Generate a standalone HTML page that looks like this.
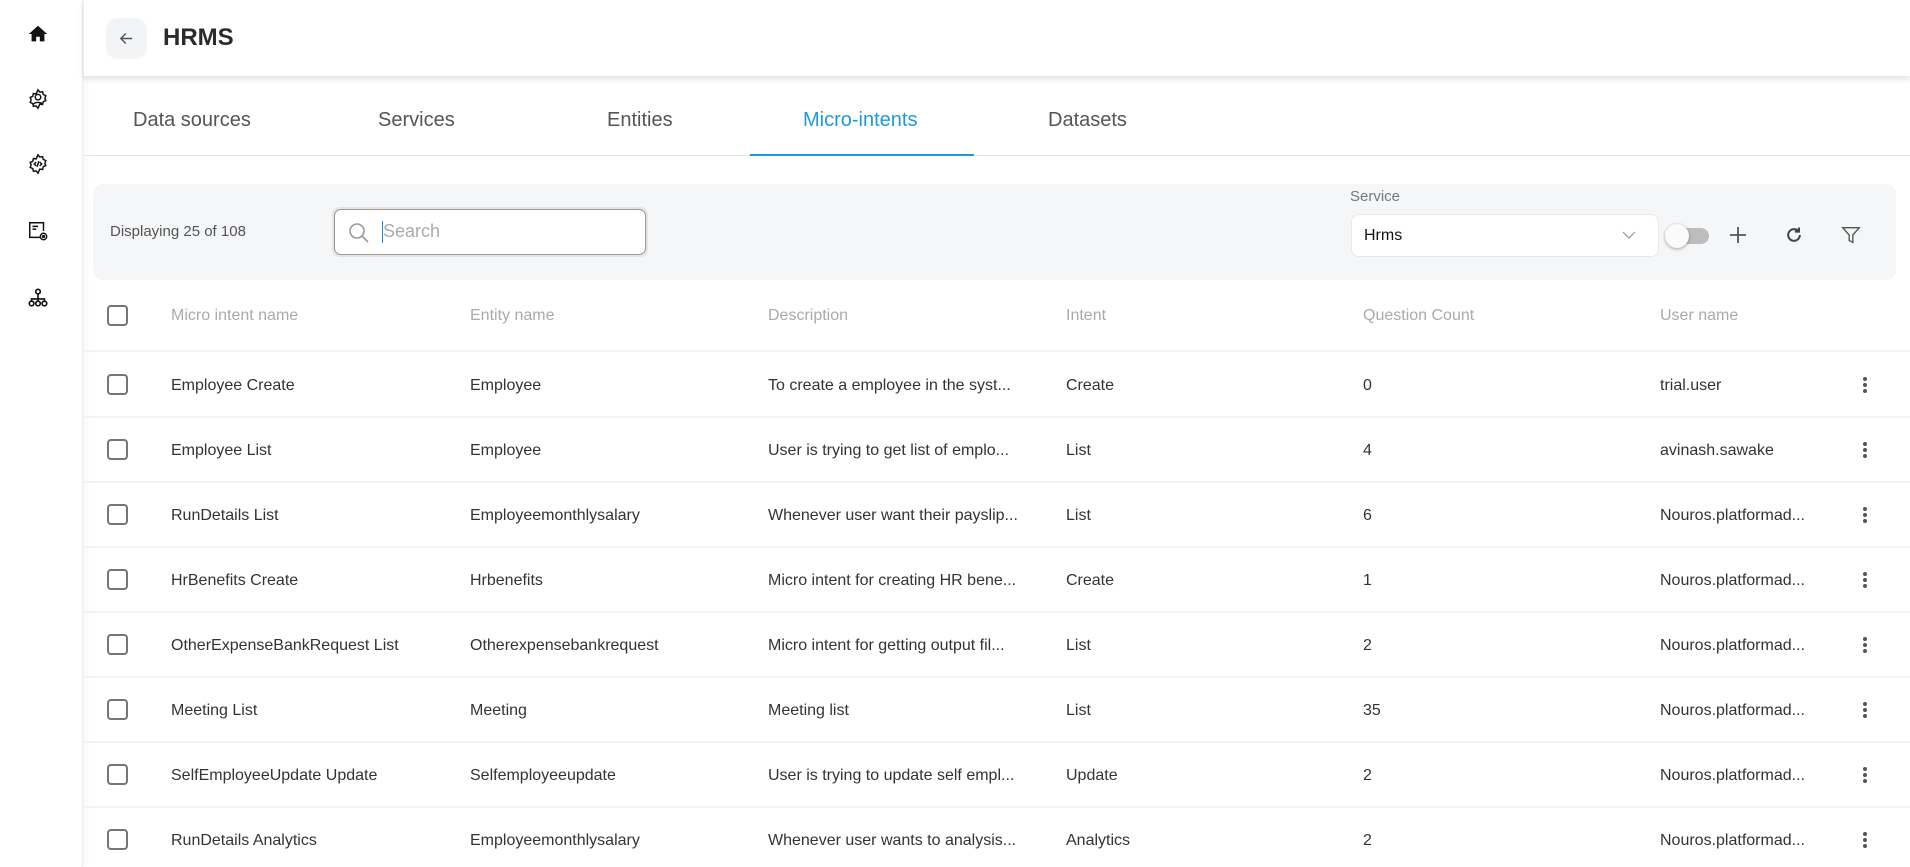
<!DOCTYPE html>
<html><head><meta charset="utf-8"><style>
*{box-sizing:border-box;margin:0;padding:0}
body{width:1910px;height:867px;overflow:hidden;background:#fff;font-family:"Liberation Sans",sans-serif;color:#333;position:relative}
.side{position:absolute;left:0;top:0;width:83px;height:867px;background:#fff;border-right:1px solid #eee;box-shadow:2px 0 6px rgba(0,0,0,.05)}
.side svg{position:absolute;left:27px}
.hdr{position:absolute;left:84px;top:0;right:0;height:76px;background:#fff;box-shadow:0 3px 6px rgba(0,0,0,.12)}
.back{position:absolute;left:22px;top:18px;width:41px;height:41px;border-radius:12px;background:#f3f4f6}
.title{position:absolute;left:79px;top:24px;font-size:24px;font-weight:bold;color:#2b2b2b}
.tabs{position:absolute;left:84px;top:84px;right:0;height:72px;border-bottom:1px solid #e8e8e8}
.tab{position:absolute;top:25px;font-size:20px;color:#555}
.tab.act{color:#1e9bd7}
.ul{position:absolute;left:666px;width:224px;bottom:-1px;height:2px;background:#1e9bd7}
.bar{position:absolute;left:93px;top:184px;width:1803px;height:96px;background:#f5f6f8;border-radius:10px}
.t{position:absolute;white-space:nowrap;font-size:16px}
.r{margin-top:2px}
.cb{position:absolute;left:107px;width:21px;height:21px;border:2px solid #757575;border-radius:4px;background:#fff}
.sep{position:absolute;left:84px;right:0;height:2px;background:#f3f3f3}
.h{color:#aaa}
.dots{position:absolute;left:1863px;width:4px}
.dots i{display:block;width:4px;height:4px;border-radius:2px;background:#555;margin-bottom:2px}
</style></head><body>
<div class="side">
<svg style="top:23px" width="22" height="22" viewBox="0 0 24 24"><path d="M12 3L2 12h3v8h5v-5h4v5h5v-8h3z" fill="#111"/></svg>
<svg style="top:88px" width="22" height="22" viewBox="0 0 24 24" fill="none" stroke="#111" stroke-width="1.6"><path d="M12 2l2 2.5 3-.5.7 3 2.8 1.3-1 2.7 1 2.7-2.8 1.3-.7 3-3-.5L12 22l-2-2.5-3 .5-.7-3L3.5 15.7l1-2.7-1-2.7L6.3 9 7 6l3 .5z"/><circle cx="12" cy="10" r="3"/><path d="M7 18c1-3 9-3 10 0"/></svg>
<svg style="top:153px" width="22" height="22" viewBox="0 0 24 24" fill="none" stroke="#111" stroke-width="1.6"><path d="M12 2l2 2.5 3-.5.7 3 2.8 1.3-1 2.7 1 2.7-2.8 1.3-.7 3-3-.5L12 22l-2-2.5-3 .5-.7-3L3.5 15.7l1-2.7-1-2.7L6.3 9 7 6l3 .5z"/><path d="M10 10l-2 2 2 2M14 10l2 2-2 2M13 9l-2 6"/></svg>
<svg style="top:220px" width="22" height="22" viewBox="0 0 24 24" fill="none" stroke="#111" stroke-width="1.6"><path d="M14 19H3V3h15v9"/><path d="M6 7h6M6 10h4"/><circle cx="18" cy="18" r="3.5"/><circle cx="18" cy="18" r="1"/></svg>
<svg style="top:287px" width="22" height="22" viewBox="0 0 24 24" fill="none" stroke="#111" stroke-width="1.8"><circle cx="12" cy="5" r="2.5"/><circle cx="5" cy="18" r="2.5"/><circle cx="12" cy="18" r="2.5"/><circle cx="19" cy="18" r="2.5"/><path d="M12 8v7M5 15v-2h14v2"/></svg>
</div>
<div class="hdr"><div class="back"><svg style="position:absolute;left:12px;top:12px" width="17" height="17" viewBox="0 0 24 24" fill="none" stroke="#555" stroke-width="2"><path d="M20 12H5M11 5l-7 7 7 7"/></svg></div><div class="title">HRMS</div></div>
<div class="tabs">
<div class="tab" style="left:49px">Data sources</div>
<div class="tab" style="left:294px">Services</div>
<div class="tab" style="left:523px">Entities</div>
<div class="tab act" style="left:719px">Micro-intents</div>
<div class="tab" style="left:964px">Datasets</div>
<div class="ul"></div>
</div>
<div class="bar">
<div class="t" style="left:17px;top:39px;color:#555;font-size:15px">Displaying 25 of 108</div>
<div style="position:absolute;left:239px;top:23px;width:316px;height:50px;border-radius:8px;background:#e4e4e4;padding:2px"><div style="width:100%;height:100%;border:1px solid #999;border-radius:7px;background:#fff;position:relative">
<svg style="position:absolute;left:12px;top:11px" width="24" height="24" viewBox="0 0 24 24" fill="none" stroke="#999" stroke-width="1.6"><circle cx="10" cy="10" r="7"/><path d="M15 15l6 6"/></svg>
<div style="position:absolute;left:47px;top:11px;width:1px;height:22px;background:#1e88e5"></div>
<div class="t" style="left:48px;top:11px;font-size:18px;color:#aaa">Search</div></div></div>
<div class="t" style="left:1257px;top:4px;font-size:15px;color:#777">Service</div>
<div style="position:absolute;left:1258px;top:30px;width:308px;height:43px;background:#fff;border:1px solid #e8e8e8;border-radius:8px">
<div class="t" style="left:12px;top:12px;color:#111">Hrms</div>
<svg style="position:absolute;left:270px;top:15px" width="14" height="10" viewBox="0 0 14 10" fill="none" stroke="#999" stroke-width="1.2"><path d="M1 2l6 6 6-6"/></svg></div>
<div style="position:absolute;left:1576px;top:44px;width:40px;height:16px;border-radius:8px;background:#bdbdbd"></div>
<div style="position:absolute;left:1572px;top:40px;width:24px;height:24px;border-radius:12px;background:#fafafa;box-shadow:0 1px 3px rgba(0,0,0,.35)"></div>
<svg style="position:absolute;left:1635px;top:41px" width="20" height="20" viewBox="0 0 20 20" stroke="#555" stroke-width="1.8"><path d="M10 2v16M2 10h16"/></svg>
<svg style="position:absolute;left:1691px;top:41px" width="20" height="20" viewBox="0 0 24 24" fill="none" stroke="#444" stroke-width="2.4"><path d="M19 12a7 7 0 1 1-2.2-5.1"/><path d="M18 3v5h-5" fill="#444"/></svg>
<svg style="position:absolute;left:1747px;top:40px" width="22" height="22" viewBox="0 0 24 24" fill="none" stroke="#555" stroke-width="1.5"><path d="M3 4h18l-7 8v8l-4-2v-6z"/></svg>
</div>
<div class="cb" style="top:305px"></div>
<div class="t h r" style="left:171px;top:305px">Micro intent name</div>
<div class="t h r" style="left:470px;top:305px">Entity name</div>
<div class="t h r" style="left:768px;top:305px">Description</div>
<div class="t h r" style="left:1066px;top:305px">Intent</div>
<div class="t h r" style="left:1363px;top:305px">Question Count</div>
<div class="t h r" style="left:1660px;top:305px">User name</div>
<div class="sep" style="top:350px"></div>
<div class="sep" style="top:416px"></div><div class="sep" style="top:481px"></div><div class="sep" style="top:546px"></div><div class="sep" style="top:611px"></div><div class="sep" style="top:676px"></div><div class="sep" style="top:741px"></div><div class="sep" style="top:806px"></div>

<div class="cb" style="top:374px"></div><div class="t r" style="left:171px;top:375px">Employee Create</div><div class="t r" style="left:470px;top:375px">Employee</div><div class="t r" style="left:768px;top:375px">To create a employee in the syst...</div><div class="t r" style="left:1066px;top:375px">Create</div><div class="t r" style="left:1363px;top:375px">0</div><div class="t r" style="left:1660px;top:375px">trial.user</div><div class="dots" style="top:377px"><i></i><i></i><i></i></div>
<div class="cb" style="top:439px"></div><div class="t r" style="left:171px;top:440px">Employee List</div><div class="t r" style="left:470px;top:440px">Employee</div><div class="t r" style="left:768px;top:440px">User is trying to get list of emplo...</div><div class="t r" style="left:1066px;top:440px">List</div><div class="t r" style="left:1363px;top:440px">4</div><div class="t r" style="left:1660px;top:440px">avinash.sawake</div><div class="dots" style="top:442px"><i></i><i></i><i></i></div>
<div class="cb" style="top:504px"></div><div class="t r" style="left:171px;top:505px">RunDetails List</div><div class="t r" style="left:470px;top:505px">Employeemonthlysalary</div><div class="t r" style="left:768px;top:505px">Whenever user want their payslip...</div><div class="t r" style="left:1066px;top:505px">List</div><div class="t r" style="left:1363px;top:505px">6</div><div class="t r" style="left:1660px;top:505px">Nouros.platformad...</div><div class="dots" style="top:507px"><i></i><i></i><i></i></div>
<div class="cb" style="top:569px"></div><div class="t r" style="left:171px;top:570px">HrBenefits Create</div><div class="t r" style="left:470px;top:570px">Hrbenefits</div><div class="t r" style="left:768px;top:570px">Micro intent for creating HR bene...</div><div class="t r" style="left:1066px;top:570px">Create</div><div class="t r" style="left:1363px;top:570px">1</div><div class="t r" style="left:1660px;top:570px">Nouros.platformad...</div><div class="dots" style="top:572px"><i></i><i></i><i></i></div>
<div class="cb" style="top:634px"></div><div class="t r" style="left:171px;top:635px">OtherExpenseBankRequest List</div><div class="t r" style="left:470px;top:635px">Otherexpensebankrequest</div><div class="t r" style="left:768px;top:635px">Micro intent for getting output fil...</div><div class="t r" style="left:1066px;top:635px">List</div><div class="t r" style="left:1363px;top:635px">2</div><div class="t r" style="left:1660px;top:635px">Nouros.platformad...</div><div class="dots" style="top:637px"><i></i><i></i><i></i></div>
<div class="cb" style="top:699px"></div><div class="t r" style="left:171px;top:700px">Meeting List</div><div class="t r" style="left:470px;top:700px">Meeting</div><div class="t r" style="left:768px;top:700px">Meeting list</div><div class="t r" style="left:1066px;top:700px">List</div><div class="t r" style="left:1363px;top:700px">35</div><div class="t r" style="left:1660px;top:700px">Nouros.platformad...</div><div class="dots" style="top:702px"><i></i><i></i><i></i></div>
<div class="cb" style="top:764px"></div><div class="t r" style="left:171px;top:765px">SelfEmployeeUpdate Update</div><div class="t r" style="left:470px;top:765px">Selfemployeeupdate</div><div class="t r" style="left:768px;top:765px">User is trying to update self empl...</div><div class="t r" style="left:1066px;top:765px">Update</div><div class="t r" style="left:1363px;top:765px">2</div><div class="t r" style="left:1660px;top:765px">Nouros.platformad...</div><div class="dots" style="top:767px"><i></i><i></i><i></i></div>
<div class="cb" style="top:829px"></div><div class="t r" style="left:171px;top:830px">RunDetails Analytics</div><div class="t r" style="left:470px;top:830px">Employeemonthlysalary</div><div class="t r" style="left:768px;top:830px">Whenever user wants to analysis...</div><div class="t r" style="left:1066px;top:830px">Analytics</div><div class="t r" style="left:1363px;top:830px">2</div><div class="t r" style="left:1660px;top:830px">Nouros.platformad...</div><div class="dots" style="top:832px"><i></i><i></i><i></i></div>
</body></html>
